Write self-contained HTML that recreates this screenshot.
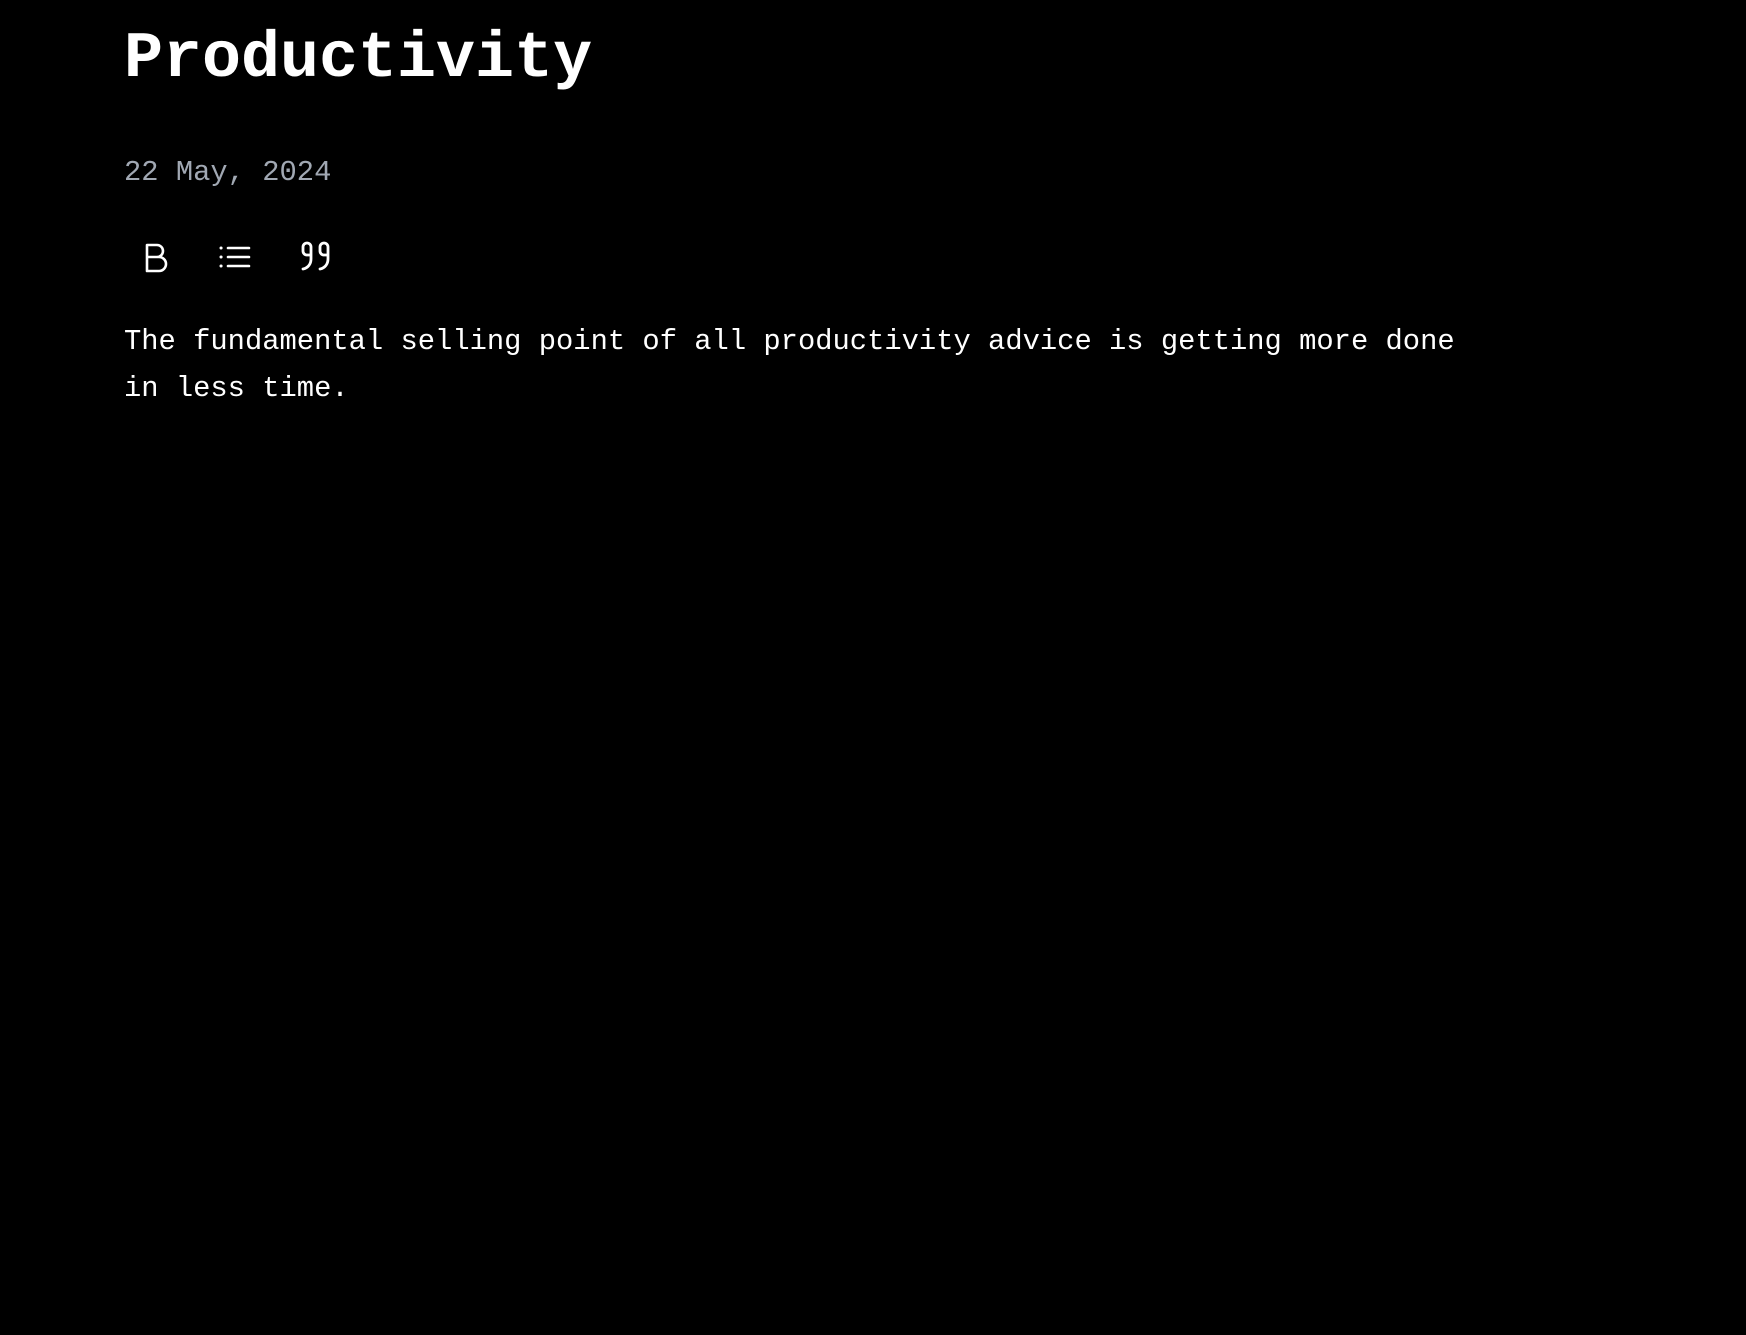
<!DOCTYPE html>
<html><head><meta charset="utf-8"><style>
html,body{margin:0;background:#000;width:1746px;height:1335px;overflow:hidden}
body{font-family:"Liberation Mono",monospace;color:#fff;position:relative}
.t{position:absolute;left:124px;top:19px;font-size:65px;font-weight:bold;line-height:80px;margin:0}
.d{position:absolute;left:124px;top:151px;font-size:28.8px;line-height:44px;color:#a1a8b3}
.p{position:absolute;left:124px;top:318px;font-size:28.8px;line-height:47px;width:1340px;margin:0}
svg{position:absolute}
</style></head><body>
<h1 class="t">Productivity</h1>
<div class="d">22 May, 2024</div>
<svg style="left:142px;top:242px" width="30" height="32" viewBox="0 0 30 32" fill="none" stroke="#fff" stroke-width="2.6" stroke-linejoin="round">
<path d="M5 3h10a6 6 0 0 1 0 12H5zM5 15h12a7 7 0 0 1 0 14H5z"/></svg>
<svg style="left:218px;top:244px" width="34" height="28" viewBox="0 0 34 28" fill="none" stroke="#fff" stroke-width="2.6" stroke-linecap="round">
<path d="M10 4h21M10 13h21M10 22h21"/><path d="M3 4h.1M3 13h.1M3 22h.1" stroke-width="3"/></svg>
<svg style="left:298px;top:240px" width="36" height="35" viewBox="0 0 36 35" fill="none" stroke="#fff" stroke-width="2.8" stroke-linejoin="round" stroke-linecap="round">
<path d="M13 15V7a4 4 0 0 0-8 0v4a4 4 0 0 0 4 4h4v4c0 5-3 9-8 10"/><path d="M30 15V7a4 4 0 0 0-8 0v4a4 4 0 0 0 4 4h4v4c0 5-3 9-8 10"/></svg>
<p class="p">The fundamental selling point of all productivity advice is getting more done in less time.</p>
</body></html>
